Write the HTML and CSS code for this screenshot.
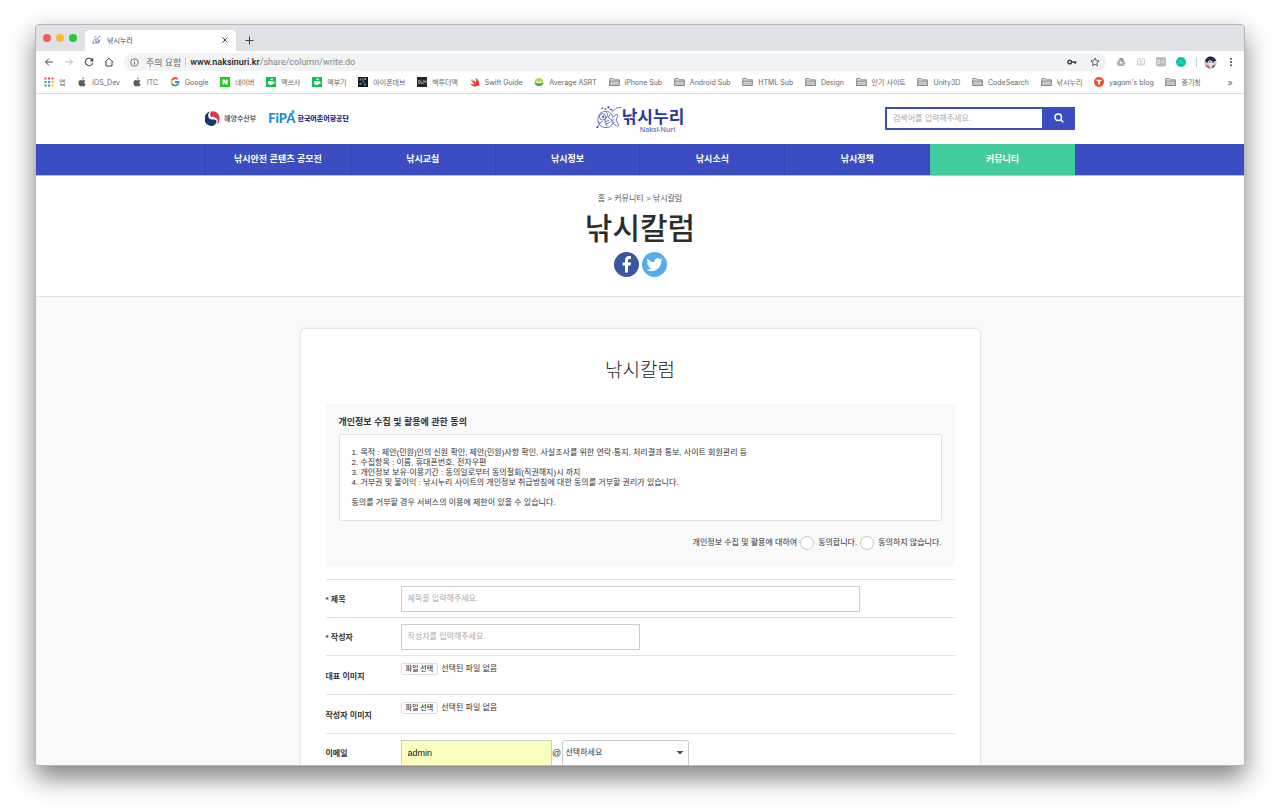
FILE: index.html
```html
<!DOCTYPE html>
<html lang="ko">
<head>
<meta charset="utf-8">
<meta name="viewport" content="width=device-width, initial-scale=1">
<title>낚시누리</title>
<link rel="stylesheet" href="styles.css">
</head>
<body>
<svg class="defs" aria-hidden="true">
  <symbol id="folder" viewBox="0 0 22 20"><path d="M1.500 17v-14h7l2 2.500h10V17z" fill="#e2e2e2" stroke="#777" stroke-width="1.600"/><path d="M1.500 8h19v9h-19z" fill="#c8c8c8" stroke="#777" stroke-width="1.400"/></symbol>
  <symbol id="apple" viewBox="0 0 20 20"><path d="M13.700 1c.1 2-1.600 4-3.600 4.100C9.900 3.200 11.700 1.200 13.700 1zM17 14.600c-.9 2-2 4.300-3.700 4.300-1.200 0-1.700-.8-3.100-.8s-1.900.8-3.100.8C5 18.900 3 15 3 11.500 3 8.200 5 6.200 7.200 6.200c1.300 0 2.200.8 3.200.8s2-.9 3.600-.9c1.100 0 2.100.6 2.800 1.500-3 1.800-2.600 5.800.2 7z" fill="#5c5c5c"/></symbol>
  <symbol id="mug" viewBox="0 0 20 20"><path fill="#0bc24b" d="M0 0h20v20H0z"/><path fill="#fff" d="M4 8h11v1.500h2v4h-3c-1 2-2 2.500-4.500 2.500C5.500 16 4 14 4 11zM8 6l2-3 4 0-1 3z"/></symbol>
</svg>
<div class="window">
  <div class="tabstrip">
    <div class="lights"><i class="red"></i><i class="yellow"></i><i class="green"></i></div>
    <div class="tab">
      <svg class="favicon" viewBox="0 0 20 20"><path d="M2 18c-1-6 2-10 7-10s5 5 1 7-6 0-8 3m8-11 7-5m-8 15 8-8m-4 8 2-5M4 5l2 1m1-4 1 2" fill="none" stroke="#7f87c5" stroke-width="2"/><circle cx="8" cy="12" r="2" fill="#8d94cc"/></svg>
      <span class="tab-title">낚시누리</span>
      <button class="plain" aria-label="탭 닫기"><svg class="i8" viewBox="0 0 16 16"><path d="m3 3 10 10M13 3 3 13" stroke="#444" stroke-width="2"/></svg></button>
    </div>
    <button class="plain newtab" aria-label="새 탭"><svg class="i9" viewBox="0 0 18 18"><path d="M9 1v16M1 9h16" stroke="#444" stroke-width="2"/></svg></button>
  </div>
  <div class="toolbar">
    <div class="navbtns">
      <button class="plain" aria-label="뒤로"><svg class="i10" viewBox="0 0 20 20"><path d="M18 10H3m7-7-7 7 7 7" fill="none" stroke="#444" stroke-width="2"/></svg></button>
      <button class="plain" aria-label="앞으로"><svg class="i10" viewBox="0 0 20 20"><path d="M2 10h15m-7-7 7 7-7 7" fill="none" stroke="#bbb" stroke-width="2"/></svg></button>
      <button class="plain" aria-label="새로고침"><svg class="i10" viewBox="0 0 20 20"><path d="M16.500 6A7.500 7.500 0 1 0 17.500 11.500" fill="none" stroke="#444" stroke-width="2.200"/><path d="M18.500 1.500v7.500H11z" fill="#444"/></svg></button>
      <button class="plain" aria-label="홈"><svg class="i10" viewBox="0 0 20 20"><path d="M1.500 10.500 10 2.500l8.500 8M4 9v9h12V9" fill="none" stroke="#444" stroke-width="2"/></svg></button>
    </div>
    <div class="address">
      <svg class="i9" viewBox="0 0 18 18"><circle cx="9" cy="9" r="7.500" fill="none" stroke="#555" stroke-width="1.600"/><path d="M9 8v5M9 4.500v2" stroke="#555" stroke-width="1.800"/></svg>
      <span class="warn">주의 요함</span><span class="bar"></span>
      <span class="url"><b>www.naksinuri.kr</b>/share/column/write.do</span>
      <svg class="i10 key" viewBox="0 0 20 20"><circle cx="5.500" cy="10" r="3.600" fill="none" stroke="#444" stroke-width="3"/><path d="M9 10h10M16.500 10v4" stroke="#444" stroke-width="3" fill="none"/></svg>
      <svg class="i10" viewBox="0 0 20 20"><path d="m10 2 2.400 5.300 5.700.6-4.300 3.900 1.200 5.700-5-2.900-5 2.900 1.200-5.700L1.900 7.900l5.700-.6z" fill="none" stroke="#444" stroke-width="1.700"/></svg>
    </div>
    <div class="exts">
      <svg class="i10" viewBox="0 0 20 20"><path d="M7 2h6l6 10-3 6H4l-3-6z" fill="#b5b5b5"/><path d="m10 8 3 5H7z" fill="#fff"/><path d="M7 2 13 2l3 8-4-1z" fill="#999"/></svg>
      <svg class="i10" viewBox="0 0 20 20"><path d="M3 4h14v10H3zM1 16h18" fill="none" stroke="#c4c4c4" stroke-width="1.600"/><path d="M10 6v6M7 9h6" stroke="#c4c4c4" stroke-width="1.500"/></svg>
      <svg class="i10" viewBox="0 0 20 20"><rect width="20" height="19" rx="4" fill="#bdbdbd"/><path d="M4 7h4M4 10h4M4 13h4M4 7v6M11 7l5 6m0-6-5 6" stroke="#eee" stroke-width="1.500"/></svg>
      <svg class="i10" viewBox="0 0 20 20"><circle cx="10" cy="10" r="10" fill="#0cbfa6"/><path d="M6 14V8q4-2 4 1v5m0-5q4-3 4 0v5" fill="none" stroke="#3edbc5" stroke-width="1.500"/></svg>
      <span class="bar"></span>
      <svg class="i13" viewBox="0 0 26 26"><circle cx="13" cy="13" r="12.500" fill="#d9c9d0"/><path d="M2 10Q6 0 14 1q8 1 10 8l-5 3-8-4-5 6z" fill="#24284a"/><path d="m9 9 8 1 2 6-5 5-5-3z" fill="#f4ded5"/><path d="M10 12h3m3 0h3" stroke="#223" stroke-width="2"/><path d="m3 17 6 2 4 6q-8 0-10-8z" fill="#c55b7c"/><path d="m18 19 5-2q-2 6-8 8z" fill="#38507c"/></svg>
      <svg class="i10" viewBox="0 0 20 20"><g fill="#444"><circle cx="10" cy="3.500" r="2"/><circle cx="10" cy="10" r="2"/><circle cx="10" cy="16.500" r="2"/></g></svg>
    </div>
  </div>
  <nav class="bookmarks" aria-label="북마크">
    <a href="#"><svg class="i10" viewBox="0 0 20 20"><g fill="#e8453c"><path d="M1 1h4v4H1zM8 1h4v4H8zM15 1h4v4h-4z"/></g><path fill="#34a853" d="M1 8h4v4H1z"/><path fill="#4285f4" d="M8 8h4v4H8z"/><path fill="#fbbc05" d="M15 8h4v4h-4zM15 15h4v4h-4z"/><path fill="#34a853" d="M1 15h4v4H1zM8 15h4v4H8z"/></svg>앱</a>
    <a href="#"><svg class="i10"><use href="#apple"/></svg>iOS_Dev</a>
    <a href="#"><svg class="i10"><use href="#apple"/></svg>ITC</a>
    <a href="#"><svg class="i10" viewBox="0 0 20 20"><g fill="none" stroke-width="3.600"><path d="M15.500 4.500A7 7 0 0 0 4 6.500" stroke="#ea4335"/><path d="M4 6.500a7 7 0 0 0 0 7" stroke="#fbbc05"/><path d="M4 13.500a7 7 0 0 0 10.500 2" stroke="#34a853"/><path d="M14.500 15.500A7 7 0 0 0 17 10h-7" stroke="#4285f4"/></g></svg>Google</a>
    <a href="#"><svg class="i10" viewBox="0 0 20 20"><path fill="#19ce19" d="M0 0h20v20H0z"/><path fill="#fff" d="M5 5h4l3 4.500V5h3.500v10H12L8.500 10.500V15H5z"/></svg>네이버</a>
    <a href="#"><svg class="i10"><use href="#mug"/></svg>맥쓰사</a>
    <a href="#"><svg class="i10"><use href="#mug"/></svg>맥부기</a>
    <a href="#"><svg class="i10" viewBox="0 0 20 20"><path fill="#151a24" d="M0 0h20v20H0z"/><path fill="#4a86c8" d="M3 3h4v4H3zM9 7h4v4H9zM12 13h4v4h-4z"/><path fill="#d5aa51" d="M13 2h3v4h-3zM3 12h4v3H3zM8 3h3v2H8z"/></svg>아이폰데브</a>
    <a href="#"><svg class="i10" viewBox="0 0 20 20"><path fill="#262626" d="M0 0h20v20H0z"/><path d="M3 7h3v6H3zM8 7v6h4V7m2 6V7l2 3 2-3v6" fill="none" stroke="#aaa" stroke-width="1.500"/></svg>백투더맥</a>
    <a href="#"><svg class="i10" viewBox="0 0 20 20"><path d="M11 2c6 3 8 8 7 12l1.500 4c-2-2-3-1-5 0C9 20 3 18 0 13c4 2 7 2 9 1C6 12 3 8 1 4l7 6-4-6 8 7c1-3 0-6-1-9z" fill="#ee3b2b"/></svg>Swift Guide</a>
    <a href="#"><svg class="i10" viewBox="0 0 20 20"><ellipse cx="10" cy="8" rx="8" ry="6" fill="#b8dc48"/><path d="M1 10q9 6 18 0-1 8-9 8t-9-8z" fill="#36a83d"/><path d="M4 10q6 3 12 0" stroke="#fff" stroke-width="2" fill="none"/></svg>Average ASRT</a>
    <a href="#"><svg class="i11"><use href="#folder"/></svg>iPhone Sub</a>
    <a href="#"><svg class="i11"><use href="#folder"/></svg>Android Sub</a>
    <a href="#"><svg class="i11"><use href="#folder"/></svg>HTML Sub</a>
    <a href="#"><svg class="i11"><use href="#folder"/></svg>Design</a>
    <a href="#"><svg class="i11"><use href="#folder"/></svg>인기 사이트</a>
    <a href="#"><svg class="i11"><use href="#folder"/></svg>Unity3D</a>
    <a href="#"><svg class="i11"><use href="#folder"/></svg>CodeSearch</a>
    <a href="#"><svg class="i11"><use href="#folder"/></svg>낚시누리</a>
    <a href="#"><svg class="i10" viewBox="0 0 20 20"><circle cx="10" cy="10" r="10" fill="#f04e23"/><path d="M5 5.500h10v3h-3.200V15H8.200V8.500H5z" fill="#fff"/></svg>yagom's blog</a>
    <a href="#"><svg class="i11"><use href="#folder"/></svg>중기청</a>
    <button class="plain more">»</button>
  </nav>

  <div class="page">
    <header class="site-head">
      <div class="container head-row">
        <div class="partners">
          <a class="ministry" href="#"><svg class="emblem" viewBox="0 0 30 30"><path d="M13 1C22-1 30 7 29 16c0 5-2 9-5 12 2-6 2-11-3-14-4-3-10-1-11-6 0-3 1-5 3-7z" fill="#e0354a"/><path d="M11 1C5 5 5 11 11 13c4 2 10 1 12 6 1 4-2 7-5 10A14.500 14.500 0 1 1 11 1z" fill="#14396f"/><path d="M10 4c-3 9 4 9 9 9 5 1 7 5 6 10-1-5-5-6-10-6C7 17 4 11 10 4z" fill="#fff"/></svg>해양수산부</a>
          <a class="agency" href="#"><span class="fipa">FiPA</span><i class="drop"></i><span class="agency-name">한국어촌어항공단</span></a>
        </div>
        <a class="logo" href="#">
          <svg class="fish" viewBox="0 0 90 84"><g fill="none" stroke="#3b46a0" stroke-width="2.500"><path d="M7 52C4 32 17 19 34 19c14 0 22 9 24 21l11-9c6-3 7 1 6 5l-5 14 8 15c1 5-3 6-7 4l-13-9c-4 11-12 16-24 15-14 0-23-7-27-23z"/><circle cx="23" cy="38" r="11"/><path d="M34 20c9 8 7 16 1 22s-3 17 4 28M6 55c6 7 13 3 15-3M30 56l15-6M33 64l17-8M48 29l-5 13 12 6M3 77l13-19M64 48l-12 3m13 6-13-2M54 22c5-9 11-6 14-12 6-6 12-2 20-5"/></g><circle cx="25" cy="38" r="4" fill="#252e8a"/><g fill="#3b46a0"><circle cx="33" cy="11" r="3"/><circle cx="43" cy="5" r="4"/><circle cx="22" cy="8" r="3"/><path d="m0 77 5-9 3 9zM45 14l8-5 5 6z"/></g></svg>
          <span class="wordmark">낚시누리<small>Naksi-Nuri</small></span>
        </a>
        <form class="search">
          <input type="text" aria-label="검색어" placeholder="검색어를 입력해주세요.">
          <button type="button" aria-label="검색"><svg class="i10" viewBox="0 0 20 20"><circle cx="8.500" cy="8.500" r="6.500" fill="none" stroke="#fff" stroke-width="3"/><path d="m13 13 5.500 5.500" stroke="#fff" stroke-width="3.500"/></svg></button>
        </form>
      </div>
    </header>
    <nav class="gnb" aria-label="주 메뉴">
      <div class="container menu">
        <a href="#">낚시안전 콘텐츠 공모전</a><a href="#">낚시교실</a><a href="#">낚시정보</a><a href="#">낚시소식</a><a href="#">낚시정책</a><a class="on" href="#">커뮤니티</a>
      </div>
    </nav>
    <section class="hero">
      <p class="crumbs">홈 &gt; 커뮤니티 &gt; 낚시칼럼</p>
      <h1>낚시칼럼</h1>
      <div class="share">
        <a href="#" aria-label="페이스북"><svg class="i25" viewBox="0 0 50 50"><circle cx="25" cy="25" r="25" fill="#3b55a0"/><path d="M22 41V27h-5v-6h5v-4c0-6 3-9 8.500-9H34v6h-3c-2 0-3 1-3 3v4h6l-1 6h-5v14z" fill="#fff"/></svg></a>
        <a href="#" aria-label="트위터"><svg class="i25" viewBox="0 0 50 50"><circle cx="25" cy="25" r="25" fill="#55acee"/><path transform="translate(9 9) scale(1.350)" d="M23.950 4.570a10 10 0 0 1-2.820.77 4.960 4.960 0 0 0 2.160-2.720c-.95.550-2 .950-3.120 1.180a4.920 4.920 0 0 0-8.390 4.480C7.690 8.100 4.070 6.130 1.640 3.160a4.820 4.820 0 0 0-.67 2.480c0 1.710.87 3.210 2.190 4.100a4.900 4.900 0 0 1-2.230-.62v.060a4.920 4.920 0 0 0 3.950 4.830 5 5 0 0 1-2.210.080 4.940 4.940 0 0 0 4.600 3.420A9.870 9.870 0 0 1 0 19.540a14 14 0 0 0 7.550 2.210c9.050 0 14-7.500 14-13.990 0-.21 0-.42-.02-.630a9.940 9.940 0 0 0 2.460-2.550z" fill="#fff"/></svg></a>
      </div>
    </section>
    <main class="content">
      <form class="card">
        <h2>낚시칼럼</h2>
        <section class="privacy">
          <h3>개인정보 수집 및 활용에 관한 동의</h3>
          <div class="terms">
            <p>1. 목적 : 제안(민원)인의 신원 확인, 제안(민원)사항 확인, 사실조사를 위한 연락·통지, 처리결과 통보, 사이트 회원관리 등<br>2. 수집항목 : 이름, 휴대폰번호, 전자우편<br>3. 개인정보 보유·이용기간 : 동의일로부터 동의철회(직권해지)시 까지<br>4. 거부권 및 불이익 : 낚시누리 사이트의 개인정보 취급방침에 대한 동의를 거부할 권리가 있습니다.</p>
            <p>동의를 거부할 경우 서비스의 이용에 제한이 있을 수 있습니다.</p>
          </div>
          <div class="agree">
            <span>개인정보 수집 및 활용에 대하여</span>
            <label><input type="radio" name="agree">동의합니다.</label>
            <label><input type="radio" name="agree">동의하지 않습니다.</label>
          </div>
        </section>
        <div class="fields">
          <div class="row"><label for="subject">* 제목</label><input id="subject" class="text wide" type="text" placeholder="제목을 입력해주세요."></div>
          <div class="row"><label for="writer">* 작성자</label><input id="writer" class="text mid" type="text" placeholder="작성자를 입력해주세요."></div>
          <div class="row file"><span class="name">대표 이미지</span><div class="picker"><input id="img1" type="file"><label for="img1">파일 선택</label><span>선택된 파일 없음</span></div></div>
          <div class="row file"><span class="name">작성자 이미지</span><div class="picker"><input id="img2" type="file"><label for="img2">파일 선택</label><span>선택된 파일 없음</span></div></div>
          <div class="row"><label for="email">이메일</label><input id="email" class="text filled" type="text" value="admin"><span class="at">@</span><select aria-label="이메일 도메인"><option>선택하세요</option></select></div>
        </div>
      </form>
    </main>
  </div>
</div>
</body>
</html>
```
FILE: styles.css
```css
* { box-sizing: border-box; }
body {
  margin: 0; height: 100vh; padding: 24px 35px 46px; background: #fff; overflow: hidden;
  font-family: Inter, "Noto Sans CJK KR", sans-serif; color: #333;
}
a { color: inherit; text-decoration: none; }
button, input, select { font: inherit; color: inherit; }
svg { display: block; flex: none; }
h1, h2, h3, p { margin: 0; }
.defs { position: absolute; width: 0; height: 0; }
.i8 { width: 8px; height: 8px; }
.i9 { width: 9px; height: 9px; }
.i10 { width: 10px; height: 10px; }
.i11 { width: 11px; height: 10px; }
.i13 { width: 13px; height: 13px; }
.i25 { width: 25px; height: 25px; }
.plain { border: 0; background: none; padding: 0; }

.window {
  height: 100%; display: flex; flex-direction: column; overflow: hidden;
  border: 1px solid #b4b7ba; border-radius: 4px 4px 3px 3px; background: #fff;
  box-shadow: 0 12px 26px rgba(0, 0, 0, .5);
}
.tabstrip { display: flex; align-items: flex-end; height: 26px; background: #dee1e6; flex: none; }
.lights { display: flex; gap: 5px; padding: 0 8px 9px 7px; }
.lights i { width: 8px; height: 8px; border-radius: 50%; }
.red { background: #fc5b57; } .yellow { background: #fdbc2e; } .green { background: #27ca40; }
.tab {
  display: flex; align-items: center; gap: 5px; width: 151px; height: 21px; padding: 0 7px 2px 7px;
  background: #fff; border-radius: 5px 5px 0 0; font-size: 7px; color: #444;
}
.favicon { width: 10px; height: 10px; }
.tab-title { flex: 1; }
.newtab { padding: 0 9px 6px; }
.toolbar { display: flex; align-items: center; height: 22px; padding: 0 8px; flex: none; }
.navbtns { display: flex; gap: 10px; width: 80px; }
.address {
  display: flex; align-items: center; flex: 1; height: 18px; padding: 0 6px; border-radius: 9px;
  background: #f1f3f4; font-family: Roboto, "Noto Sans CJK KR", sans-serif; font-size: 9px; color: #80868b;
}
.warn { margin-left: 7px; color: #666a6e; }
.bar { width: 1px; height: 10px; margin: 0 4px; background: #c8cacc; }
.url b { font-weight: 500; color: #222; }
.key { margin-left: auto; margin-right: 13px; }
.exts { display: flex; align-items: center; gap: 10px; padding-left: 10px; }
.exts .bar { margin: 0 -3px 0 0; }
.exts .i13 { margin-right: -1px; }
.bookmarks {
  display: flex; align-items: center; justify-content: space-between; height: 21px; padding: 0 11px 2px 8px;
  border-bottom: 1px solid #dcdcdc; font-size: 7px; color: #666; flex: none; white-space: nowrap;
}
.bookmarks a { display: flex; align-items: center; gap: 5px; }
.more { font-size: 9px; padding-left: 15px; }

.page { flex: 1; min-height: 0; overflow: hidden; font-family: "Liberation Sans", "Noto Sans CJK KR", sans-serif; font-size: 8px; }
.container { width: 100%; max-width: 870px; margin: 0 auto; }
.head-row { display: grid; grid-template-columns: 1fr auto 1fr; align-items: center; height: 50px; padding-bottom: 2px; }
.partners { display: flex; align-items: center; gap: 12px; }
.ministry { display: flex; align-items: center; gap: 4px; font-size: 7px; font-weight: 500; }
.emblem { width: 15px; height: 15px; }
.agency { display: flex; align-items: center; }
.fipa { font: 900 13px Lato, sans-serif; color: #168ad0; }
.drop { width: 4px; height: 4px; border-radius: 50%; background: #45bdea; align-self: flex-start; margin-left: -4px; }
.agency-name { font-size: 7px; font-weight: 900; color: #27348b; margin-left: 2px; }
.logo { display: flex; align-items: center; }
.fish { width: 26px; height: 26px; }
.wordmark { position: relative; font-size: 17px; line-height: 24px; font-weight: 700; color: #2c3796; }
.wordmark small { position: absolute; left: 18px; bottom: -4px; font: 500 7px/8px "Noto Sans", sans-serif; color: #5b64ae; }
.search { display: flex; justify-self: end; width: 190px; height: 23px; }
.search input { flex: 1; min-width: 0; border: 2px solid #3a4dc1; border-right: 0; padding: 0 6px; border-radius: 0; outline: 0; }
.search button { width: 33px; display: grid; place-items: center; border: 0; background: #3a4dc1; }
::placeholder { color: #aaa; opacity: 1; }

.gnb { background: #3a4dc1; border-bottom: 1px solid #b8bde0; }
.menu { display: grid; grid-template-columns: repeat(6, 1fr); border-left: 1px solid #3143ae; }
.menu a {
  height: 31px; display: grid; place-items: center; border-right: 1px solid #3143ae; padding-bottom: 2px;
  color: #fff; font-size: 9px; font-weight: 700;
}
.menu .on { background: #43cd9e; border-right: 0; }
.hero { display: flex; flex-direction: column; align-items: center; height: 121px; padding-top: 16px; border-bottom: 1px solid #e2e2e2; }
.crumbs { line-height: 14px; color: #555; }
.hero h1 { font-size: 30px; line-height: 46px; font-weight: 500; color: #2d2d2d; }
.share { display: flex; gap: 3px; }
.content { background: #f9f9f9; padding-top: 31px; }
.card {
  width: 100%; max-width: 681px; margin: 0 auto; padding: 24px 25px 60px; background: #fff;
  border: 1px solid #e6e6e6; border-radius: 6px; box-shadow: 0 0 2px #e2e2e2;
}
.card h2 { text-align: center; font-size: 19px; line-height: 36px; font-weight: 300; color: #222; }
.privacy { margin-top: 15px; padding: 10px 13px 16px; background: #f9f9f9; }
.privacy h3 { font-size: 9px; line-height: 16px; font-weight: 700; }
.terms { display: grid; gap: 10px; margin-top: 4px; padding: 13px 12px 12px; border: 1px solid #e2e2e2; border-radius: 2px; background: #fff; line-height: 10px; }
.agree { display: flex; justify-content: flex-end; align-items: center; gap: 3px; margin-top: 15px; line-height: 14px; }
.agree label { display: flex; align-items: center; gap: 4px; }
.agree input { appearance: none; width: 14px; height: 14px; margin: 0; border: 1px solid #c8c8c8; border-radius: 50%; background: #fff; }
.fields { margin-top: 13px; }
.row { display: flex; align-items: center; min-height: 38px; border-top: 1px solid #e4e4e4; }
.row > label, .name { width: 75px; font-weight: 700; flex: none; }
.text { height: 26px; border: 1px solid #ccc; border-radius: 0; padding: 0 6px; background: #fff; outline: 0; }
.wide { width: 459px; }
.mid { width: 239px; }
.filled { width: 151px; background: #faffbd; color: #111; font-size: 9px; }
.file { min-height: 39px; }
.picker { display: flex; align-items: center; gap: 3px; align-self: flex-start; margin-top: 7px; line-height: 12px; }
.picker input { position: absolute; width: 1px; height: 1px; opacity: 0; }
.picker label { padding: 0 4px; font-size: 7px; line-height: 10px; font-weight: 500; border: 1px solid #ddd; border-radius: 2px; }
.at { width: 10px; text-align: center; font-size: 9px; }
.row select {
  width: 127px; height: 26px; border: 1px solid #ccc; border-radius: 2px; padding: 0 3px; appearance: none;
  background: linear-gradient(to bottom right, #555 50%, transparent 50%) right 4px center / 4px 4px no-repeat,
    linear-gradient(to bottom left, #555 50%, transparent 50%) right 8px center / 4px 4px no-repeat, #fff;
}
```
